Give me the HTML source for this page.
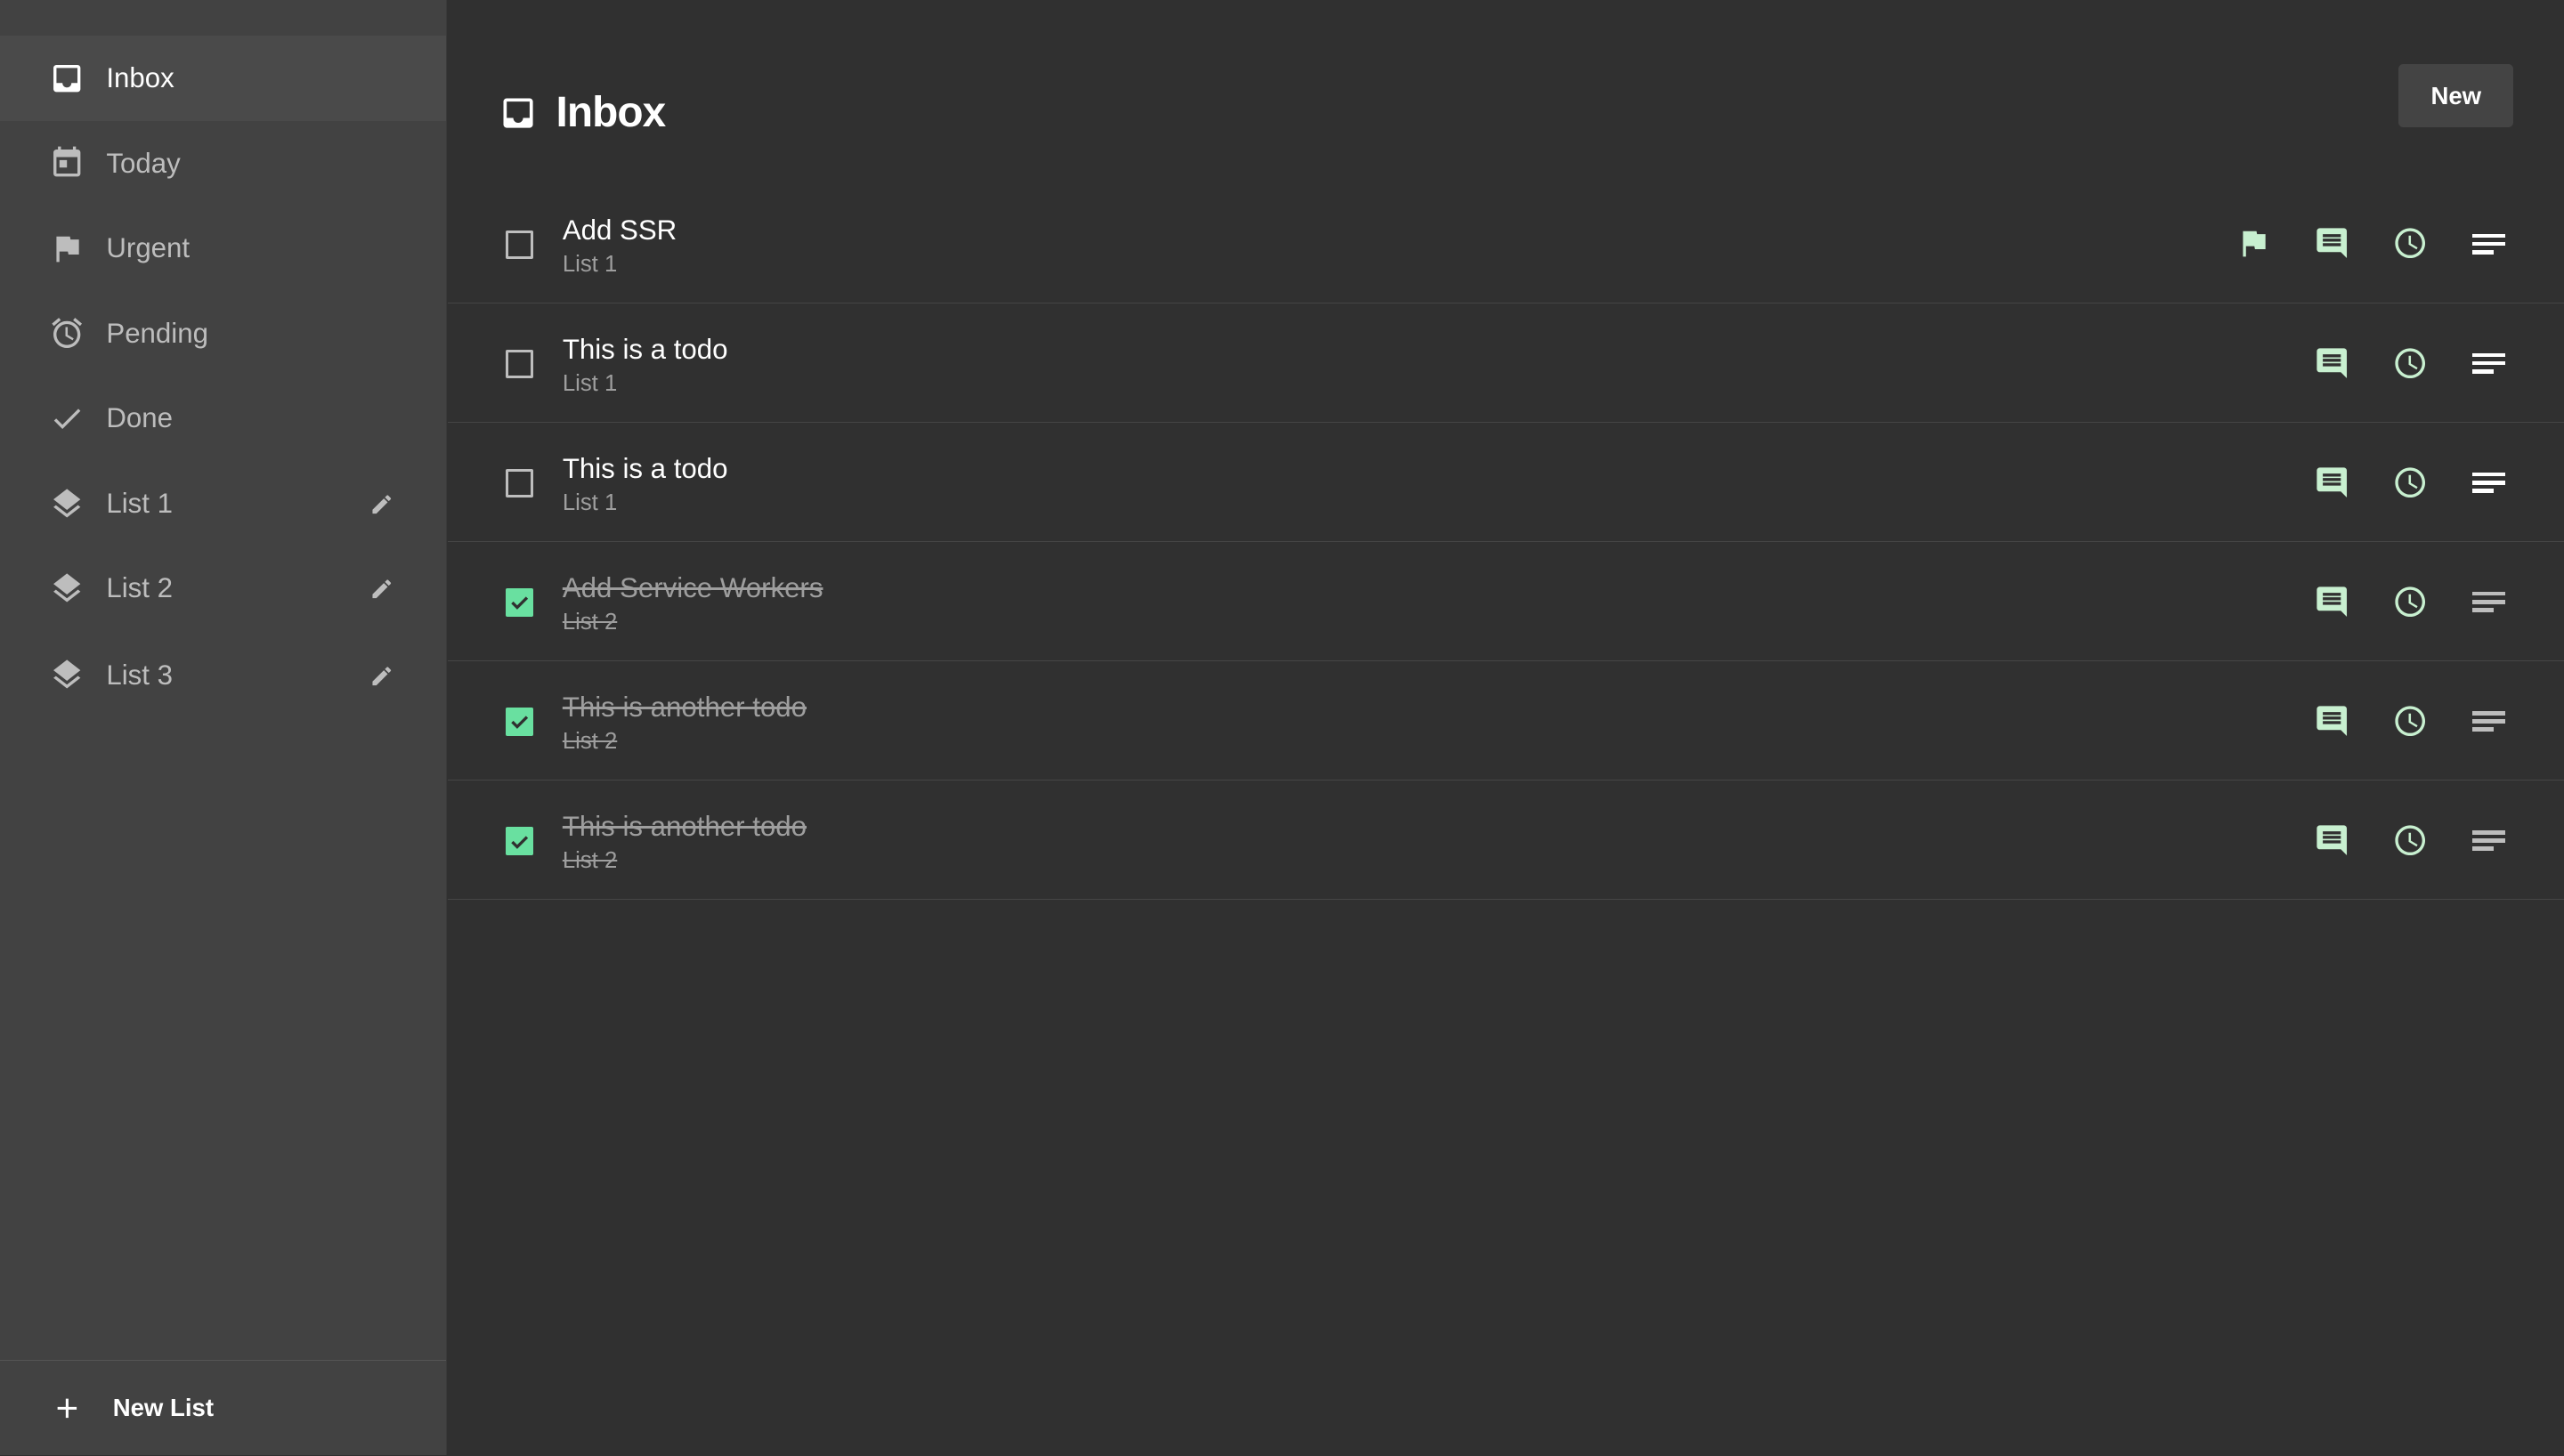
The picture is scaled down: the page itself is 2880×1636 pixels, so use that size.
<!DOCTYPE html>
<html><head><meta charset="utf-8"><style>
html,body{margin:0;padding:0;background:#303030;}
body{width:1568px;height:890px;zoom:1.83673;overflow:hidden;font-family:"Liberation Sans",Roboto,sans-serif;position:relative;}
.side{position:absolute;left:0;top:0;width:273px;height:890px;background:#424242;border-right:1px solid #3a3a3a;}
.item{position:absolute;left:0;width:273px;height:52px;display:flex;align-items:center;color:#bdbdbd;font-size:17px;}
.item svg{position:absolute;left:30px;top:15px;width:22px;height:22px;fill:#bdbdbd;}
.item span{position:absolute;left:65px;}
.item .ed{left:226px;top:19px;width:15px;height:15px;}
.item.act{background:#4a4a4a;color:#fff;}
.item.act svg{fill:#fff;}
.foot{position:absolute;left:0;top:832px;width:273px;border-top:1px solid #555;height:58px;}
.foot span{position:absolute;left:69px;top:20px;color:#fff;font-size:15px;font-weight:bold;}
.foot svg{position:absolute;left:31px;top:19px;width:20px;height:20px;fill:#fff;}
.main{position:absolute;left:274px;top:0;right:0;height:890px;}
h1{position:absolute;left:66px;top:54px;margin:0;color:#fff;font-size:26px;font-weight:bold;letter-spacing:-0.5px;}
.hicon{position:absolute;left:31px;top:57px;width:24px;height:24px;fill:#fff;}
.new{position:absolute;right:31px;top:39px;width:70px;height:39px;background:#444;border-radius:3px;color:#fff;font-size:15px;font-weight:bold;text-align:center;line-height:39px;}
.row{position:absolute;left:0;right:0;height:72px;border-bottom:1px solid #454545;}
.cb{position:absolute;left:35px;top:28px;width:14px;height:14px;border:2px solid #bdbdbd;border-radius:1px;}
.cb.on{background:#69e0a0;border-color:#69e0a0;}
.cb.on svg{position:absolute;left:-1px;top:-1px;width:16px;height:16px;}
.t{position:absolute;left:70px;top:18px;color:#fff;font-size:17px;}
.s{position:absolute;left:70px;top:41px;color:#9e9e9e;font-size:14px;}
.done .t{color:#9e9e9e;text-decoration:line-through;}
.done .s{text-decoration:line-through;}
.ic{position:absolute;top:25px;width:22px;height:22px;}
.nt{position:absolute;top:30px;width:20px;height:14px;}
.nt i{position:absolute;left:0;height:2.5px;background:#fff;}
.done .nt i{background:#bdbdbd;}
</style></head><body>
<div class="side">
 <div class="item act" style="top:22px"><svg viewBox="0 0 24 24"><path d="M19 3H5c-1.1 0-2 .9-2 2v14c0 1.1.9 2 2 2h14c1.1 0 2-.9 2-2V5c0-1.1-.9-2-2-2zm0 12h-4c0 1.66-1.35 3-3 3s-3-1.34-3-3H5V5h14v10z"/></svg><span>Inbox</span></div>
 <div class="item" style="top:74px"><svg viewBox="0 0 24 24"><path d="M19 3h-1V1h-2v2H8V1H6v2H5c-1.1 0-2 .9-2 2v14c0 1.1.9 2 2 2h14c1.1 0 2-.9 2-2V5c0-1.1-.9-2-2-2zm0 16H5V8h14v11zM7 10h5v5H7z"/></svg><span>Today</span></div>
 <div class="item" style="top:126px"><svg viewBox="0 0 24 24"><path d="M14.4 6L14 4H5v17h2v-7h5.6l.4 2h7V6z"/></svg><span>Urgent</span></div>
 <div class="item" style="top:178px"><svg viewBox="0 0 24 24"><path d="M22 5.72l-4.6-3.86-1.29 1.53 4.6 3.86L22 5.72zM7.88 3.39L6.6 1.86 2 5.71l1.29 1.53 4.590-3.85zM12.5 8H11v6l4.75 2.85.75-1.23-4-2.37V8zM12 4c-4.97 0-9 4.030-9 9s4.020 9 9 9c4.97 0 9-4.03 9-9s-4.03-9-9-9zm0 16c-3.87 0-7-3.13-7-7s3.13-7 7-7 7 3.13 7 7-3.13 7-7 7z"/></svg><span>Pending</span></div>
 <div class="item" style="top:230px"><svg viewBox="0 0 24 24"><path d="M9 16.17L4.83 12l-1.42 1.41L9 19 21 7l-1.41-1.41z"/></svg><span>Done</span></div>
 <div class="item" style="top:282px"><svg viewBox="0 0 24 24"><path d="M11.99 18.54l-7.37-5.73L3 14.07l9 7 9-7-1.63-1.27-7.38 5.74zM12 16l7.36-5.73L21 9l-9-7-9 7 1.63 1.27L12 16z"/></svg><span>List 1</span><svg class="ed" viewBox="0 0 24 24"><path d="M3 17.25V21h3.75L17.81 9.94l-3.75-3.75L3 17.25zM20.71 7.04a1 1 0 000-1.41l-2.34-2.34a1 1 0 00-1.41 0l-1.83 1.830 3.75 3.75 1.83-1.83z"/></svg></div>
 <div class="item" style="top:334px"><svg viewBox="0 0 24 24"><path d="M11.99 18.54l-7.37-5.73L3 14.07l9 7 9-7-1.63-1.27-7.38 5.74zM12 16l7.36-5.73L21 9l-9-7-9 7 1.63 1.27L12 16z"/></svg><span>List 2</span><svg class="ed" viewBox="0 0 24 24"><path d="M3 17.25V21h3.75L17.81 9.94l-3.75-3.75L3 17.25zM20.71 7.04a1 1 0 000-1.41l-2.34-2.34a1 1 0 00-1.41 0l-1.83 1.830 3.75 3.75 1.83-1.83z"/></svg></div>
 <div class="item" style="top:387px"><svg viewBox="0 0 24 24"><path d="M11.99 18.54l-7.37-5.73L3 14.07l9 7 9-7-1.63-1.27-7.38 5.74zM12 16l7.36-5.73L21 9l-9-7-9 7 1.63 1.27L12 16z"/></svg><span>List 3</span><svg class="ed" viewBox="0 0 24 24"><path d="M3 17.25V21h3.75L17.81 9.94l-3.75-3.75L3 17.25zM20.71 7.04a1 1 0 000-1.41l-2.34-2.34a1 1 0 00-1.41 0l-1.83 1.830 3.75 3.75 1.83-1.83z"/></svg></div>
 <div class="foot"><svg viewBox="0 0 24 24"><path d="M19 13h-6v6h-2v-6H5v-2h6V5h2v6h6v2z"/></svg><span>New List</span></div>
</div>
<div class="main">
 <svg class="hicon" viewBox="0 0 24 24"><path d="M19 3H5c-1.1 0-2 .9-2 2v14c0 1.1.9 2 2 2h14c1.1 0 2-.9 2-2V5c0-1.1-.9-2-2-2zm0 12h-4c0 1.66-1.35 3-3 3s-3-1.34-3-3H5V5h14v10z"/></svg>
 <h1>Inbox</h1>
 <div class="new">New</div>
 <svg width="0" height="0" style="position:absolute"><defs>
  <symbol id="cm" viewBox="0 0 24 24"><path fill="#c8f0d0" d="M21.99 4c0-1.1-.89-2-1.99-2H4c-1.1 0-2 .9-2 2v12c0 1.1.9 2 2 2h14l4 4-.01-18zM18 14H6v-2h12v2zm0-3H6V9h12v2zm0-3H6V6h12v2z"/></symbol>
  <symbol id="ck" viewBox="0 0 24 24"><path fill="#c8f0d0" d="M11.99 2C6.47 2 2 6.48 2 12s4.47 10 9.99 10C17.52 22 22 17.52 22 12S17.52 2 11.99 2zM12 20c-4.42 0-8-3.58-8-8s3.580-8 8-8 8 3.58 8 8-3.58 8-8 8zm.5-13H11v6l5.25 3.15.75-1.23-4.5-2.67z"/></symbol>
  <symbol id="fl" viewBox="0 0 24 24"><path fill="#c8f0d0" d="M14.4 6L14 4H5v17h2v-7h5.6l.4 2h7V6z"/></symbol>
  <symbol id="tk" viewBox="0 0 16 16"><path d="M3.5 8.2l3 3 6-6" fill="none" stroke="#303030" stroke-width="1.8"/></symbol>
 </defs></svg>

 <div class="row" style="top:113px"><div class="cb"></div><div class="t">Add SSR</div><div class="s">List 1</div>
  <svg class="ic" style="left:1093px"><use href="#fl"/></svg>
  <svg class="ic" style="left:1141px"><use href="#cm"/></svg><svg class="ic" style="left:1189px"><use href="#ck"/></svg>
  <div class="nt" style="left:1238px"><i style="top:0;width:20px"></i><i style="top:5px;width:20px"></i><i style="top:10px;width:13px"></i></div></div>
 <div class="row" style="top:186px"><div class="cb"></div><div class="t">This is a todo</div><div class="s">List 1</div>
  <svg class="ic" style="left:1141px"><use href="#cm"/></svg><svg class="ic" style="left:1189px"><use href="#ck"/></svg>
  <div class="nt" style="left:1238px"><i style="top:0;width:20px"></i><i style="top:5px;width:20px"></i><i style="top:10px;width:13px"></i></div></div>
 <div class="row" style="top:259px"><div class="cb"></div><div class="t">This is a todo</div><div class="s">List 1</div>
  <svg class="ic" style="left:1141px"><use href="#cm"/></svg><svg class="ic" style="left:1189px"><use href="#ck"/></svg>
  <div class="nt" style="left:1238px"><i style="top:0;width:20px"></i><i style="top:5px;width:20px"></i><i style="top:10px;width:13px"></i></div></div>
 <div class="row done" style="top:332px"><div class="cb on"><svg><use href="#tk"/></svg></div><div class="t">Add Service Workers</div><div class="s">List 2</div>
  <svg class="ic" style="left:1141px"><use href="#cm"/></svg><svg class="ic" style="left:1189px"><use href="#ck"/></svg>
  <div class="nt" style="left:1238px"><i style="top:0;width:20px"></i><i style="top:5px;width:20px"></i><i style="top:10px;width:13px"></i></div></div>
 <div class="row done" style="top:405px"><div class="cb on"><svg><use href="#tk"/></svg></div><div class="t">This is another todo</div><div class="s">List 2</div>
  <svg class="ic" style="left:1141px"><use href="#cm"/></svg><svg class="ic" style="left:1189px"><use href="#ck"/></svg>
  <div class="nt" style="left:1238px"><i style="top:0;width:20px"></i><i style="top:5px;width:20px"></i><i style="top:10px;width:13px"></i></div></div>
 <div class="row done" style="top:478px"><div class="cb on"><svg><use href="#tk"/></svg></div><div class="t">This is another todo</div><div class="s">List 2</div>
  <svg class="ic" style="left:1141px"><use href="#cm"/></svg><svg class="ic" style="left:1189px"><use href="#ck"/></svg>
  <div class="nt" style="left:1238px"><i style="top:0;width:20px"></i><i style="top:5px;width:20px"></i><i style="top:10px;width:13px"></i></div></div>
</div>
</body></html>
